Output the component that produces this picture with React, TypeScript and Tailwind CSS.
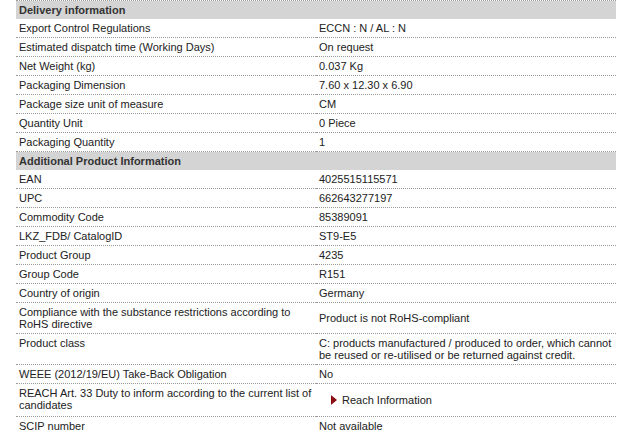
type Row = { label: string; value: React.ReactNode };

const delivery: Row[] = [
  { label: "Export Control Regulations", value: "ECCN : N / AL : N" },
  { label: "Estimated dispatch time (Working Days)", value: "On request" },
  { label: "Net Weight (kg)", value: "0.037 Kg" },
  { label: "Packaging Dimension", value: "7.60 x 12.30 x 6.90" },
  { label: "Package size unit of measure", value: "CM" },
  { label: "Quantity Unit", value: "0 Piece" },
  { label: "Packaging Quantity", value: "1" },
];

const additional: Row[] = [
  { label: "EAN", value: "4025515115571" },
  { label: "UPC", value: "662643277197" },
  { label: "Commodity Code", value: "85389091" },
  { label: "LKZ_FDB/ CatalogID", value: "ST9-E5" },
  { label: "Product Group", value: "4235" },
  { label: "Group Code", value: "R151" },
  { label: "Country of origin", value: "Germany" },
  {
    label: "Compliance with the substance restrictions according to RoHS directive",
    value: "Product is not RoHS-compliant",
  },
  {
    label: "Product class",
    value:
      "C: products manufactured / produced to order, which cannot be reused or re-utilised or be returned against credit.",
  },
  { label: "WEEE (2012/19/EU) Take-Back Obligation", value: "No" },
  {
    label: "REACH Art. 33 Duty to inform according to the current list of candidates",
    value: (
      <div className="flex items-center py-[7px] pl-3">
        <svg width="6" height="10" viewBox="0 0 6 10" className="mr-[5px]">
          <path d="M0 0 L6 5 L0 10 Z" fill="#8a0f14" />
        </svg>
        <span>Reach Information</span>
      </div>
    ),
  },
  { label: "SCIP number", value: "Not available" },
];

function Header({ title }: { title: string }) {
  return (
    <tr>
      <th
        colSpan={2}
        className="h-[18px] bg-[#d4d4d4] px-[3px] py-0 text-left align-middle font-bold text-[#333]"
      >
        {title}
      </th>
    </tr>
  );
}

function DataRow({ row }: { row: Row }) {
  return (
    <tr>
      <td className="w-1/2 border-b border-dotted border-[#9a9a9a] px-[3px] py-[3px] align-top">
        {row.label}
      </td>
      <td className="w-1/2 border-b border-dotted border-[#9a9a9a] px-[3px] py-[3px] align-middle">
        {row.value}
      </td>
    </tr>
  );
}

export default function App() {
  return (
    <div className="min-h-[435px] bg-white pl-4">
      <table
        className="w-[600px] table-fixed border-separate border-spacing-0 border-t border-dotted border-[#9a9a9a] text-[11px] leading-[12px] text-[#222]"
        style={{ fontFamily: '"Liberation Sans", Arial, sans-serif' }}
      >
        <tbody>
          <Header title="Delivery information" />
          {delivery.map((r) => (
            <DataRow key={r.label} row={r} />
          ))}
          <Header title="Additional Product Information" />
          {additional.map((r) => (
            <DataRow key={r.label} row={r} />
          ))}
        </tbody>
      </table>
    </div>
  );
}
